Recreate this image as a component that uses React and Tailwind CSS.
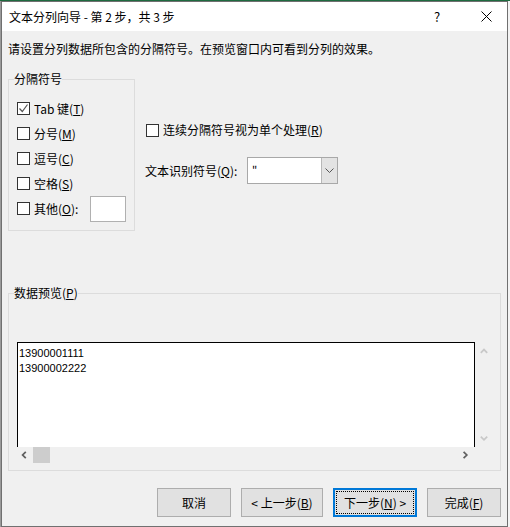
import React from 'react';

const FONT = { fontFamily: '"Noto Sans CJK SC", "Noto Sans", sans-serif' };

function Box({ checked }) {
  return (
    <span className="w-[13px] h-[13px] border border-[#333333] bg-white flex items-center justify-center flex-shrink-0">
      {checked && (
        <svg width="11" height="11" viewBox="0 0 11 11" fill="none" stroke="#555" strokeWidth="1.2">
          <path d="M1.5 5.5l2.8 3 5.2-7" />
        </svg>
      )}
    </span>
  );
}

function Option({ checked, children }) {
  return (
    <div className="flex items-center h-[25px] gap-[4px]">
      <Box checked={checked} />
      <span className="leading-[16px]">{children}</span>
    </div>
  );
}

function Chevron({ dir, color }) {
  const d = {
    up: 'M1 6l4-4 4 4',
    down: 'M1 2l4 4 4-4',
    left: 'M6 1L2 5l4 4',
    right: 'M2 1l4 4-4 4',
  }[dir];
  return (
    <svg width="10" height="8" viewBox="0 0 10 10" fill="none" stroke={color} strokeWidth="2.2">
      <path d={d} />
    </svg>
  );
}

export default function App() {
  return (
    <div className="w-[510px] h-[527px] bg-white text-[12px] text-black overflow-hidden" style={FONT}>
      <div className="h-[1px] bg-[#1d6b3f]" />
      <div className="flex">
        <div className="w-[1px] h-[526px] bg-[#9a9a9a]" />
        <div className="w-[507px] h-[526px] border border-[#707070] flex flex-col">
          <div className="h-[29px] bg-white flex items-center pl-[7px]">
            <span className="flex-1 leading-[16px]">文本分列向导 - 第 2 步，共 3 步</span>
            <span className="w-[12px] text-[13px] leading-[16px] mr-[35px]">?</span>
            <svg className="mr-[15px]" width="11" height="11" viewBox="0 0 11 11" fill="none" stroke="#000" strokeWidth="1">
              <path d="M0.5 0.5l10 10M10.5 0.5l-10 10" />
            </svg>
          </div>

          <div className="flex-1 bg-[#f0f0f0] px-[6px]">
            <p className="pt-[10px] leading-[16px]">请设置分列数据所包含的分隔符号。在预览窗口内可看到分列的效果。</p>

            <div className="mt-[14px] flex">
              <fieldset className="w-[127px] h-[160px] border border-[#dcdcdc] pl-[8px]">
                <legend className="-ml-[3px] px-0 leading-[16px]">分隔符号</legend>
                <div className="mt-[9px]">
                  <Option checked>Tab 键(<u>T</u>)</Option>
                  <Option>分号(<u>M</u>)</Option>
                  <Option>逗号(<u>C</u>)</Option>
                  <Option>空格(<u>S</u>)</Option>
                  <div className="flex items-center h-[25px] gap-[4px]">
                    <Box />
                    <span className="leading-[16px]">其他(<u>O</u>):</span>
                    <span className="ml-[8px] w-[36px] h-[26px] bg-white border border-[#b0b0b0]" />
                  </div>
                </div>
              </fieldset>

              <div className="ml-[10px] pt-[49px]">
                <div className="flex items-center h-[20px] gap-[4px] ml-[1px]">
                  <Box />
                  <span className="leading-[16px]">连续分隔符号视为单个处理(<u>R</u>)</span>
                </div>
                <div className="mt-[17px] flex items-center">
                  <span className="w-[102px] leading-[16px]">文本识别符号(<u>Q</u>):</span>
                  <div className="w-[91px] h-[27px] bg-white border border-[#a8a8a8] flex">
                    <span className="flex-1 pl-[4px] leading-[22px] text-[11px]">"</span>
                    <span className="w-[16px] bg-[#e3e3e3] border-l border-[#b8b8b8] flex items-center justify-center">
                      <svg width="9" height="6" viewBox="0 0 9 6" fill="none" stroke="#555" strokeWidth="1">
                        <path d="M0.5 0.5l4 4 4-4" />
                      </svg>
                    </span>
                  </div>
                </div>
              </div>
            </div>

            <fieldset className="mt-[54px] w-[493px] h-[186px] border border-[#dcdcdc] pl-[8px]">
              <legend className="-ml-[3px] px-0 leading-[16px]">数据预览(<u>P</u>)</legend>
              <div className="mt-[41px] flex">
                <div className="w-[458px]">
                  <div
                    className="h-[105px] bg-white border-t border-l border-r border-black pl-[1px] pt-[3px] text-[11px] leading-[15px]"
                    style={{ fontFamily: '"Liberation Sans", Arial, sans-serif' }}
                  >
                    <div>13900001111</div>
                    <div>13900002222</div>
                  </div>
                  <div className="h-[16px] flex items-center">
                    <span className="w-[16px] flex justify-center">
                      <Chevron dir="left" color="#606060" />
                    </span>
                    <span className="w-[17px] h-[16px] bg-[#cdcdcd]" />
                    <span className="flex-1" />
                    <span className="w-[16px] flex justify-center mr-[1px]">
                      <Chevron dir="right" color="#606060" />
                    </span>
                  </div>
                </div>
                <div className="w-[17px] h-[105px] flex flex-col items-center justify-between pt-[6px] pb-[4px]">
                  <Chevron dir="up" color="#c8c8c8" />
                  <Chevron dir="down" color="#c8c8c8" />
                </div>
              </div>
            </fieldset>

            <div className="mt-[17px] flex justify-end gap-[10px]">
              <button className="w-[74px] h-[29px] bg-[#e1e1e1] border border-[#adadad] leading-[16px]">取消</button>
              <button className="w-[82px] h-[29px] bg-[#e1e1e1] border border-[#adadad] leading-[16px]">&lt; 上一步(<u>B</u>)</button>
              <button className="w-[84px] h-[29px] bg-[#e1e1e1] border-2 border-[#0078d7] p-[1px]">
                <span className="w-full h-full border border-dotted border-black flex items-center justify-center leading-[16px]">
                  下一步(<u>N</u>) &gt;
                </span>
              </button>
              <button className="w-[74px] h-[29px] bg-[#e1e1e1] border border-[#adadad] leading-[16px]">完成(<u>F</u>)</button>
            </div>
          </div>
        </div>
        <div className="w-[2px] h-[526px] bg-[#f4f4f4]" />
      </div>
    </div>
  );
}
